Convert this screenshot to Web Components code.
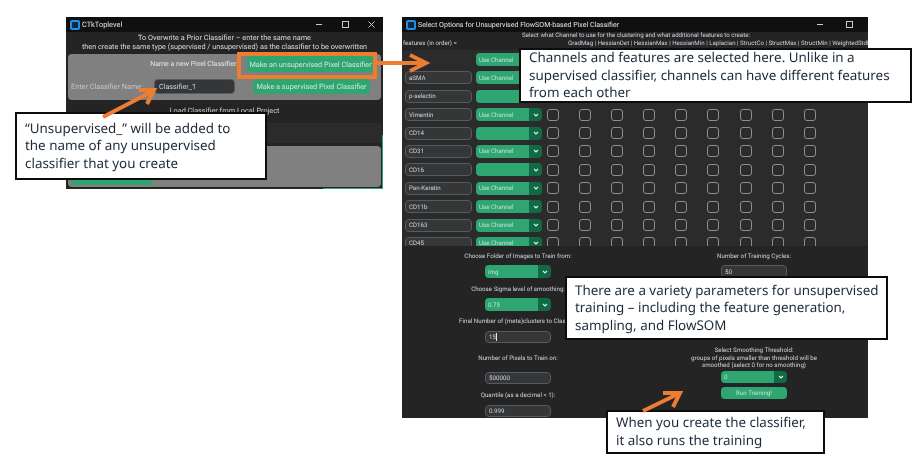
<!DOCTYPE html>
<html lang="en">

<head>
    <meta charset="UTF-8">
    <title>Unsupervised pixel classifier slide</title>
    <style>
        html, body { margin: 0; background: #fff; }
        .canvas { position: relative; width: 924px; height: 466px; overflow: hidden; background: #fff; font-family: Roboto, sans-serif; text-rendering: geometricPrecision; }
        ctk-window.left { left: 66px; top: 17px; width: 317px; height: 172px; --ctl: 24px; --title: 7.4px; }
        ctk-window.right { left: 402px; top: 17px; width: 466px; height: 401px; --ctl: 27px; --title: 7.05px; }
        note-box.a { left: 15px; top: 112px; width: 252px; height: 68px; }
        note-box.b { left: 519px; top: 48px; width: 393px; height: 55px; }
        note-box.c { left: 565px; top: 276px; width: 323px; height: 64px; }
        note-box.d { left: 606px; top: 410px; width: 219px; height: 44px; }
    </style>
</head>

<body>
    <div class="canvas">
        <ctk-window class="left" title="CTkToplevel" close>
            <overwrite-panel></overwrite-panel>
        </ctk-window>
        <ctk-window class="right" title="Select Options for Unsupervised FlowSOM-based Pixel Classifier">
            <options-panel></options-panel>
        </ctk-window>
        <note-box class="a">“Unsupervised_” will be added to<br>the name of any unsupervised<br>classifier that you create</note-box>
        <note-box class="b">Channels and features are selected here. Unlike in a<br>supervised classifier, channels can have different features<br>from each other</note-box>
        <note-box class="c">There are a variety parameters for unsupervised<br>training – including the feature generation,<br>sampling, and FlowSOM</note-box>
        <note-box class="d">When you create the classifier,<br>it also runs the training</note-box>
        <slide-marks></slide-marks>
    </div>

    <script>
        class CtkWindow extends HTMLElement {
            connectedCallback() {
                const hasClose = this.hasAttribute('close');
                this.attachShadow({ mode: 'open' }).innerHTML = `
                <style>
                    :host { position: absolute; display: flex; flex-direction: column; background: #242424; overflow: hidden; color: #dce4ee; filter: blur(.3px); }
                    .bar { flex: none; height: 15px; background: #101010; display: flex; align-items: center; padding-left: 4px; gap: 2px; font-size: var(--title); color: #e4e4e4; white-space: nowrap; }
                    .icon { width: 6px; height: 6px; border: 2px solid #1f8fe8; border-radius: 2px; background: #10283c; flex: none; }
                    .title { flex: 1; }
                    .ctl { flex: none; width: var(--ctl); display: flex; justify-content: center; }
                    svg { display: block; }
                    main { flex: 1; min-height: 0; display: flex; flex-direction: column; }
                </style>
                <div class="bar">
                    <span class="icon"></span>
                    <span class="title">${this.getAttribute('title')}</span>
                    <span class="ctl"><svg width="9" height="9" viewBox="0 0 9 9"><path d="M1 4.5h6" stroke="#ccc" fill="none"/></svg></span>
                    <span class="ctl"><svg width="9" height="9" viewBox="0 0 9 9"><rect x="1.5" y="1.5" width="6" height="6" stroke="#ccc" fill="none"/></svg></span>
                    ${hasClose ? '<span class="ctl"><svg width="9" height="9" viewBox="0 0 9 9"><path d="M1.5 1.5l6 6M7.5 1.5l-6 6" stroke="#ccc" fill="none"/></svg></span>' : '<span style="width:3px"></span>'}
                </div>
                <main><slot></slot></main>`;
            }
        }

        // green button, also used without text
        class CtkButton extends HTMLElement {
            connectedCallback() {
                this.attachShadow({ mode: 'open' }).innerHTML = `
                <style>
                    :host { display: flex; align-items: center; justify-content: center; box-sizing: border-box; background: #2fa572; color: #d4e6dc; border-radius: 4px; font-size: 7.3px; white-space: nowrap; }
                </style>
                <slot></slot>`;
            }
        }

        class CtkEntry extends HTMLElement {
            connectedCallback() {
                const caret = this.hasAttribute('focused') ? '<i></i>' : '';
                this.attachShadow({ mode: 'open' }).innerHTML = `
                <style>
                    :host { display: flex; align-items: center; box-sizing: border-box; background: #343638; border: 1px solid #565b5e; border-radius: 4px; padding-left: 3px; color: #cfd5dc; font-size: 6.2px; white-space: nowrap; overflow: hidden; }
                    i { width: 1px; height: 8px; background: #e8e8e8; margin-left: .5px; }
                </style>
                <slot></slot>${caret}`;
            }
        }

        class CtkDropdown extends HTMLElement {
            connectedCallback() {
                this.attachShadow({ mode: 'open' }).innerHTML = `
                <style>
                    :host { display: flex; box-sizing: border-box; border-radius: 4px; overflow: hidden; font-size: 6.2px; color: #bfe0cf; white-space: nowrap; }
                    .val { flex: 1; background: #2fa572; display: flex; align-items: center; padding-left: 3px; }
                    .arr { flex: none; width: 13px; background: #106a43; display: flex; align-items: center; justify-content: center; }
                </style>
                <div class="val"><slot></slot></div>
                <div class="arr"><svg width="6" height="4" viewBox="0 0 6 4"><path d="M1 1l2 2 2-2" stroke="#e6efe9" stroke-width="1.1" fill="none"/></svg></div>`;
            }
        }

        class CtkCheck extends HTMLElement {
            connectedCallback() {
                this.attachShadow({ mode: 'open' }).innerHTML = `
                <style>
                    :host { display: block; box-sizing: border-box; width: 12px; height: 12px; border: 1.5px solid #8b8e90; border-radius: 3px; flex: none; }
                </style>`;
            }
        }

        class ChannelRow extends HTMLElement {
            connectedCallback() {
                const label = this.getAttribute('use') === 'no' ? '' : 'Use Channel';
                const name = this.getAttribute('name');
                this.attachShadow({ mode: 'open' }).innerHTML = `
                <style>
                    :host { display: flex; align-items: center; height: 13px; flex: none; }
                    ctk-entry, .blank { width: 67px; height: 13px; margin-right: 4px; }
                    ctk-dropdown { width: 66px; height: 13px; margin-right: 5px; }
                    .checks { display: flex; gap: 20.1px; }
                </style>
                ${name ? `<ctk-entry>${name}</ctk-entry>` : '<div class="blank"></div>'}
                <ctk-dropdown>${label}</ctk-dropdown>
                <div class="checks">${'<ctk-check></ctk-check>'.repeat(9)}</div>`;
            }
        }

        class OverwritePanel extends HTMLElement {
            connectedCallback() {
                this.attachShadow({ mode: 'open' }).innerHTML = `
                <style>
                    :host { display: flex; flex-direction: column; font-size: 7.3px; position: relative; flex: 1; }
                    .intro { height: 22px; text-align: center; line-height: 9px; padding-top: 1px; box-sizing: border-box; color: #d6dde4; white-space: nowrap; }
                    .gray { margin: 0 2px; background: #808080; border-radius: 4px; }
                    .top { height: 46px; box-sizing: border-box; padding-top: 2px; display: flex; flex-direction: column; gap: 7px; }
                    .r { display: flex; align-items: center; height: 16px; }
                    .r1 { justify-content: flex-end; padding-right: 7px; height: 16px; }
                    .r1 span { margin-right: 9px; color: #e2e6ea; font-size: 7px; }
                    .r1 ctk-button { width: 127px; height: 16px; }
                    .r2 { height: 15px; padding-left: 3px; }
                    .r2 span { width: 83px; color: #c4c8cc; }
                    .r2 ctk-entry { width: 81px; height: 15px; font-size: 7.2px; padding-left: 4px; }
                    .r2 ctk-button { width: 117px; height: 15px; margin-left: 18px; }
                    .load { height: 23px; text-align: center; line-height: 22px; color: #c8ced4; }
                    .dark { height: 20px; margin-right: 1px; background: #2b2b2b; border-radius: 4px 4px 0 0; }
                    .bottom { height: 41px; margin-top: 3px; display: flex; align-items: flex-end; padding: 0 0 2px 3px; box-sizing: border-box; }
                    .bottom ctk-button { width: 82px; height: 12px; }
                    .edge { position: absolute; right: 0; bottom: 0; width: 1px; height: 54px; background: #2fa572; }
                    .edge2 { position: absolute; right: 0; bottom: 0; width: 60px; height: 1px; background: #2fa572; }
                </style>
                <div class="intro">To Overwrite a Prior Classifier – enter the same name<br>then create the same type (supervised / unsupervised) as the classifier to be overwritten</div>
                <div class="gray top">
                    <div class="r r1"><span>Name a new Pixel Classifier:</span><ctk-button>Make an unsupervised Pixel Classifier</ctk-button></div>
                    <div class="r r2"><span>Enter Classifier Name:</span><ctk-entry>Classifier_1</ctk-entry><ctk-button>Make a supervised Pixel Classifier</ctk-button></div>
                </div>
                <div class="load">Load Classifier from Local Project</div>
                <div class="dark"></div>
                <div class="gray bottom"><ctk-button></ctk-button></div>
                <i class="edge"></i><i class="edge2"></i>`;
            }
        }

        class FormField extends HTMLElement {
            connectedCallback() {
                this.attachShadow({ mode: 'open' }).innerHTML = `
                <style>
                    :host { display: block; text-align: center; font-size: 6.2px; line-height: 12px; color: #cdd3da; white-space: nowrap; }
                </style>
                <slot></slot>`;
            }
        }

        class OptionsPanel extends HTMLElement {
            connectedCallback() {
                const rows = [
                    ['', 1], ['aSMA', 1], ['p-selectin', 0], ['Vimentin', 1], ['CD14', 0], ['CD31', 1],
                    ['CD16', 0], ['Pan-Keratin', 1], ['CD11b', 1], ['CD163', 1], ['CD45', 1]
                ].map(r => `<channel-row name="${r[0]}" use="${r[1] ? 'yes' : 'no'}"></channel-row>`).join('');
                this.attachShadow({ mode: 'open' }).innerHTML = `
                <style>
                    :host { display: flex; flex-direction: column; flex: 1; min-height: 0; font-size: 6.15px; color: #cdd3da; }
                    .head { flex: none; height: 18px; line-height: 7.5px; white-space: nowrap; overflow: hidden; }
                    .head .l1 { padding-left: 120px; }
                    .head .l2 { display: grid; grid-template-columns: 166px auto; }
                    .feat { padding-left: 1px; }
                    .scroll { flex: none; height: 196px; background: #2b2b2b; overflow: hidden; border-radius: 4px 4px 0 0; padding: 3px 0 0 3px; box-sizing: border-box; display: flex; flex-direction: column; gap: 5.4px; }
                    .form { flex: 1; display: grid; grid-template-columns: 232px 240px; padding-top: 4px; }
                    .col { display: flex; flex-direction: column; align-items: center; }
                    form-field { width: 100%; }
                    ctk-dropdown, ctk-entry { width: 66px; flex: none; }
                    ctk-button { width: 66px; height: 12px; flex: none; font-size: 6.2px; color: #bfe0cf; margin-top: 4px; }
                </style>
                <div class="head">
                    <div class="l1">Select what Channel to use for the clustering and what additional features to create:</div>
                    <div class="l2"><span class="feat">features (in order) =</span><span>GradMag | HessianDet | HessianMax | HessianMin | Laplacian | StructCo | StructMax | StructMin | WeightedStdDev</span></div>
                </div>
                <div class="scroll">${rows}</div>
                <div class="form">
                    <div class="col">
                        <form-field style="height:10px">Choose Folder of Images to Train from:</form-field>
                        <ctk-dropdown style="height:13px;margin-top:5px">img</ctk-dropdown>
                        <form-field style="height:10px;margin-top:5px">Choose Sigma level of smoothing:</form-field>
                        <ctk-dropdown style="height:13px;margin-top:5px">0.75</ctk-dropdown>
                        <form-field style="height:10px;margin-top:4px">Final Number of (meta)clusters to Classify:</form-field>
                        <ctk-entry focused style="height:12px;margin-top:6px">15</ctk-entry>
                        <form-field style="height:10px;margin-top:9px">Number of Pixels to Train on:</form-field>
                        <ctk-entry style="height:12px;margin-top:10px">500000</ctk-entry>
                        <form-field style="height:10px;margin-top:5px">Quantile (as a decimal &lt; 1):</form-field>
                        <ctk-entry style="height:12px;margin-top:6px">0.999</ctk-entry>
                    </div>
                    <div class="col">
                        <form-field style="height:10px">Number of Training Cycles:</form-field>
                        <ctk-entry style="height:13px;margin-top:5px">50</ctk-entry>
                        <form-field style="height:23px;margin-top:69px;line-height:7.5px">Select Smoothing Threshold:<br>groups of pixels smaller than threshold will be<br>smoothed (select 0 for no smoothing)</form-field>
                        <ctk-dropdown style="height:12px;margin-top:1px">0</ctk-dropdown>
                        <ctk-button>Run Training!</ctk-button>
                    </div>
                </div>`;
            }
        }

        class NoteBox extends HTMLElement {
            connectedCallback() {
                this.attachShadow({ mode: 'open' }).innerHTML = `
                <style>
                    :host { position: absolute; display: flex; align-items: center; box-sizing: border-box; background: #fff; border: 2.5px solid #0c0c0c; padding-left: 8px; font-family: "Noto Sans", sans-serif; font-size: 13.4px; line-height: 17.6px; color: #1c2a38; white-space: nowrap; filter: blur(.2px); }
                </style>
                <slot></slot>`;
            }
        }

        // arrows and the highlight square, drawn over the windows and boxes
        class SlideMarks extends HTMLElement {
            connectedCallback() {
                this.attachShadow({ mode: 'open' }).innerHTML = `
                <style>
                    :host { position: absolute; left: 0; top: 0; width: 924px; height: 466px; pointer-events: none; }
                    svg { display: block; }
                    path, rect { fill: none; stroke: #ed7d31; stroke-width: 4; }
                </style>
                <svg width="924" height="466" viewBox="0 0 924 466">
                    <rect x="239" y="54" width="136" height="23"/>
                    <path d="M377 63H425"/>
                    <path d="M410 55L426 63L410 71"/>
                    <path d="M103 117L153 91"/>
                    <path d="M139 90L154 90L147 104"/>
                    <path d="M643 411L680 393"/>
                    <path d="M663 393L680 393L673 407"/>
                </svg>`;
            }
        }

        customElements.define('ctk-window', CtkWindow);
        customElements.define('ctk-button', CtkButton);
        customElements.define('ctk-entry', CtkEntry);
        customElements.define('ctk-dropdown', CtkDropdown);
        customElements.define('ctk-check', CtkCheck);
        customElements.define('channel-row', ChannelRow);
        customElements.define('overwrite-panel', OverwritePanel);
        customElements.define('form-field', FormField);
        customElements.define('options-panel', OptionsPanel);
        customElements.define('note-box', NoteBox);
        customElements.define('slide-marks', SlideMarks);
    </script>
</body>

</html>
